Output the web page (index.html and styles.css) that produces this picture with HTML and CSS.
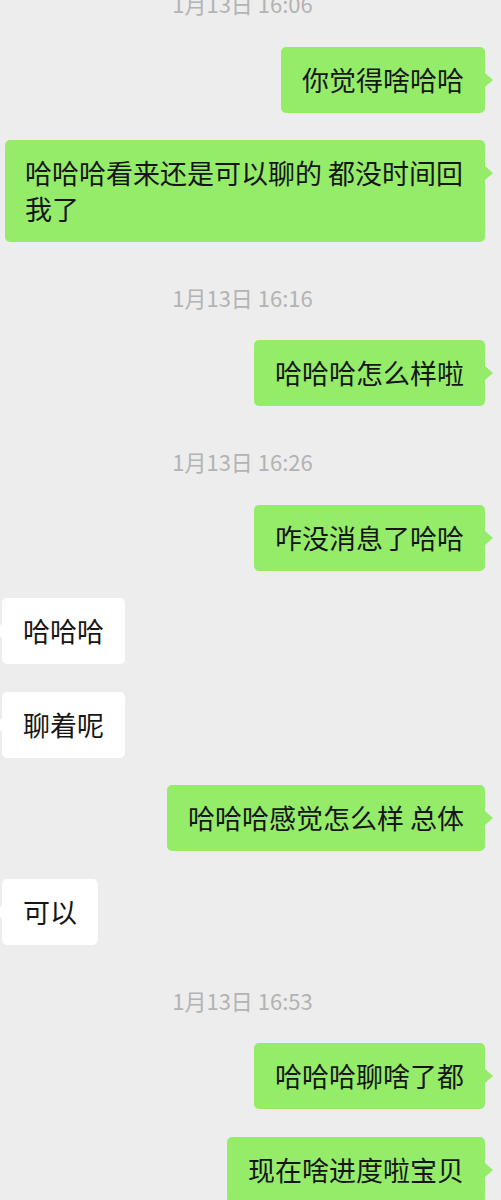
FILE: index.html
```html
<!DOCTYPE html>
<html lang="zh-CN">
<head>
    <meta charset="UTF-8">
    <meta name="viewport" content="width=device-width, initial-scale=1.0">
    <title>聊天</title>
    <link rel="stylesheet" href="styles.css">
</head>
<body>
    <main class="chat">
        <div class="time">1月13日 16:06</div>
        <div class="row mine"><div class="bubble">你觉得啥哈哈</div></div>
        <div class="row mine wide"><div class="bubble">哈哈哈看来还是可以聊的 都没时间回我了</div></div>

        <div class="time">1月13日 16:16</div>
        <div class="row mine"><div class="bubble">哈哈哈怎么样啦</div></div>

        <div class="time">1月13日 16:26</div>
        <div class="row mine"><div class="bubble">咋没消息了哈哈</div></div>
        <div class="row theirs"><div class="bubble">哈哈哈</div></div>
        <div class="row theirs"><div class="bubble">聊着呢</div></div>
        <div class="row mine"><div class="bubble">哈哈哈感觉怎么样 总体</div></div>
        <div class="row theirs"><div class="bubble">可以</div></div>

        <div class="time">1月13日 16:53</div>
        <div class="row mine"><div class="bubble">哈哈哈聊啥了都</div></div>
        <div class="row mine"><div class="bubble">现在啥进度啦宝贝</div></div>
    </main>
</body>
</html>
```

FILE: styles.css
```css
html, body {
    margin: 0;
    padding: 0;
    background-color: #ededed;
}
body {
    font-family: "Noto Sans CJK SC", "Noto Sans", sans-serif;
    color: #161616;
    overflow: hidden;
}
.chat {
    display: flex;
    flex-direction: column;
    gap: 27.6px;
    margin-top: -9px;
}
.time {
    text-align: center;
    font-size: 22px;
    line-height: 24px;
    color: #b3b3b3;
    margin: 15px 0 4px;
    padding-right: 16px;
}
.chat .time:first-child {
    margin-top: 0;
}
.row {
    display: flex;
}
.row.mine {
    justify-content: flex-end;
    padding: 0 16px 0 5px;
}
.row.theirs {
    justify-content: flex-start;
    padding: 0 16px 0 2px;
}
.bubble {
    position: relative;
    font-size: 27px;
    line-height: 36px;
    padding: 15px 21px;
    border-radius: 5px;
    word-break: break-all;
}
.wide .bubble {
    padding: 15px 16px 15px 20px;
}
.mine .bubble {
    background-color: #95ec69;
}
.theirs .bubble {
    background-color: #ffffff;
}
.bubble::after {
    content: "";
    position: absolute;
    top: 26px;
    width: 0;
    height: 0;
    border-top: 7px solid transparent;
    border-bottom: 7px solid transparent;
}
.mine .bubble::after {
    right: -8px;
    border-left: 8px solid #95ec69;
}
.theirs .bubble::after {
    left: -8px;
    border-right: 8px solid #ffffff;
}
```
